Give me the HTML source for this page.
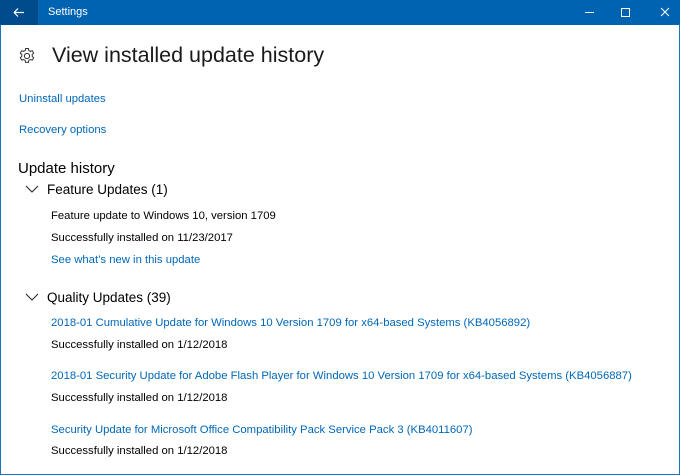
<!DOCTYPE html>
<html><head><meta charset="utf-8"><style>
*{margin:0;padding:0;box-sizing:border-box}
body{width:680px;height:475px;overflow:hidden;background:#fff;font-family:"Liberation Sans",sans-serif;position:relative}
.frame{position:absolute;left:0;top:0;width:680px;height:475px;border:1px solid #1a73c2;border-top:none}
.tb{position:absolute;left:0;top:0;width:680px;height:25px;background:#0063b1;color:#fff}
.back{position:absolute;left:0;top:0;width:38px;height:25px;background:#004b8c}
.t{position:absolute;white-space:nowrap;color:#000}
.a{color:#0067b8}
.s{font-size:11.3px}
</style></head><body>
<div class="frame"></div>
<div class="tb">
<div class="back"><svg width="38" height="25"><path d="M14 12.5h10M14 12.5l4-4M14 12.5l4 4" stroke="#fff" stroke-width="1.2" fill="none"/></svg></div>
<div class="t" style="left:48px;top:6px;font-size:11px;color:#fff">Settings</div>
<svg style="position:absolute;left:580px;top:0" width="100" height="25"><path d="M5 12.5h9" stroke="#fff"/><path d="M41.5 8.5h8v8h-8z" stroke="#fff" fill="none"/><path d="M81 8l8 8M89 8l-8 8" stroke="#fff"/></svg>
</div>
<svg style="position:absolute;left:18px;top:47px" width="18" height="18" viewBox="0 0 18 18"><g fill="none" stroke="#333" stroke-width="1"><circle cx="9" cy="9" r="2.6"/><path d="M7.6 1.5h2.8l.4 2 1.6.9 1.9-.7 1.4 2.4-1.5 1.4v1.9l1.5 1.3-1.4 2.4-1.9-.6-1.6.9-.4 2H7.6l-.4-2-1.6-.9-1.9.6-1.4-2.4 1.5-1.3V7.5L2.3 6.1l1.4-2.4 1.9.7 1.6-.9z"/></g></svg>
<div class="t" style="left:52px;top:43px;font-size:21.5px;color:#1a1a1a">View installed update history</div>
<div class="t a s" style="left:19px;top:93px">Uninstall updates</div>
<div class="t a s" style="left:19px;top:124px">Recovery options</div>
<div class="t" style="left:18px;top:160px;font-size:15px">Update history</div>
<svg style="position:absolute;left:25px;top:184px" width="14" height="10"><path d="M1 2l6 6 6-6" stroke="#222" fill="none"/></svg>
<div class="t" style="left:47px;top:182px;font-size:13.5px">Feature Updates (1)</div>
<div class="t s" style="left:51px;top:210px">Feature update to Windows 10, version 1709</div>
<div class="t s" style="left:51px;top:232px">Successfully installed on 11/23/2017</div>
<div class="t a s" style="left:51px;top:254px">See what’s new in this update</div>
<svg style="position:absolute;left:25px;top:292px" width="14" height="10"><path d="M1 2l6 6 6-6" stroke="#222" fill="none"/></svg>
<div class="t" style="left:47px;top:290px;font-size:13.5px">Quality Updates (39)</div>
<div class="t a s" style="left:51px;top:317px">2018-01 Cumulative Update for Windows 10 Version 1709 for x64-based Systems (KB4056892)</div>
<div class="t s" style="left:51px;top:339px">Successfully installed on 1/12/2018</div>
<div class="t a s" style="left:51px;top:370px">2018-01 Security Update for Adobe Flash Player for Windows 10 Version 1709 for x64-based Systems (KB4056887)</div>
<div class="t s" style="left:51px;top:392px">Successfully installed on 1/12/2018</div>
<div class="t a s" style="left:51px;top:424px">Security Update for Microsoft Office Compatibility Pack Service Pack 3 (KB4011607)</div>
<div class="t s" style="left:51px;top:445px">Successfully installed on 1/12/2018</div>
</body></html>
